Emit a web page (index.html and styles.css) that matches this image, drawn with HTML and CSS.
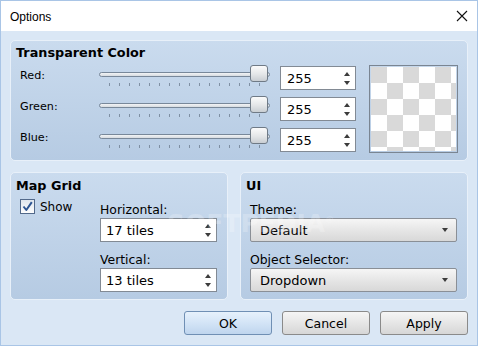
FILE: index.html
```
<!DOCTYPE html>
<html lang="en">
<head>
  <meta charset="UTF-8">
  <title>Options</title>
  <link rel="stylesheet" href="styles.css">
</head>
<body>

  <div class="window">
    <div class="titlebar">
      <span class="title">Options</span>
      <svg class="close" width="12" height="12" viewBox="0 0 12 12">
        <path d="M1 1 L11 11 M11 1 L1 11" stroke="#111" stroke-width="1.1" fill="none" />
      </svg>
    </div>

    <div class="content">
      <!-- Transparent colour -->
      <section class="panel color-panel">
        <h3>Transparent Color</h3>
        <div class="color-grid">
          <div class="label">Red:</div>
          <div class="slider"><div class="track"></div><div class="thumb"></div><div class="ticks"></div></div>
          <div class="spin small"><span>255</span><div class="arrows"><i class="up"></i><i class="down"></i></div></div>

          <div class="preview"></div>

          <div class="label">Green:</div>
          <div class="slider"><div class="track"></div><div class="thumb"></div><div class="ticks"></div></div>
          <div class="spin small"><span>255</span><div class="arrows"><i class="up"></i><i class="down"></i></div></div>

          <div class="label">Blue:</div>
          <div class="slider"><div class="track"></div><div class="thumb"></div><div class="ticks"></div></div>
          <div class="spin small"><span>255</span><div class="arrows"><i class="up"></i><i class="down"></i></div></div>
        </div>
      </section>

      <div class="row">
        <!-- Map grid -->
        <section class="panel grid-panel">
          <h3>Map Grid</h3>
          <div class="grid-body">
            <div class="check">
              <span class="box">
                <svg width="13" height="13" viewBox="0 0 13 13">
                  <path d="M2.5 6.5 L5.3 10 L10.8 2.2" stroke="#2d5592" stroke-width="2" fill="none" stroke-linejoin="round" />
                </svg>
              </span>
              <span>Show</span>
            </div>
            <div class="fields">
              <div class="field-label">Horizontal:</div>
              <div class="spin wide"><span>17 tiles</span><div class="arrows"><i class="up"></i><i class="down"></i></div></div>
              <div class="field-label second">Vertical:</div>
              <div class="spin wide"><span>13 tiles</span><div class="arrows"><i class="up"></i><i class="down"></i></div></div>
            </div>
          </div>
        </section>

        <!-- UI -->
        <section class="panel ui-panel">
          <h3>UI</h3>
          <div class="fields ui-fields">
            <div class="field-label">Theme:</div>
            <div class="combo"><span>Default</span><i class="down"></i></div>
            <div class="field-label second">Object Selector:</div>
            <div class="combo"><span>Dropdown</span><i class="down"></i></div>
          </div>
        </section>
      </div>

      <div class="buttons">
        <button class="btn default">OK</button>
        <button class="btn">Cancel</button>
        <button class="btn">Apply</button>
      </div>
    </div>

    <div class="watermark">SOFTPEDIA<sup>®</sup></div>
  </div>

</body>
</html>
```

FILE: styles.css
```
html, body {
  margin: 0;
  padding: 0;
}

body {
  width: 478px;
  height: 346px;
  overflow: hidden;
  font-family: "DejaVu Sans", sans-serif;
  font-size: 12px;
  color: #000;
}

.window {
  position: relative;
  box-sizing: border-box;
  width: 478px;
  height: 346px;
  border: 1px solid #a9c5e6;
  background: #dae7f5;
}

.titlebar {
  height: 30px;
  background: #fff;
  display: flex;
  align-items: center;
  justify-content: space-between;
  padding: 0 9px 0 9px;
}

.title {
  font-family: "Liberation Sans", Arial, sans-serif;
  font-size: 12px;
  margin-top: 1px;
}

.content {
  padding: 9px 9px 0 9px;
}

.panel {
  box-sizing: border-box;
  border: 1px solid #e8f0f9;
  border-radius: 5px;
  background: linear-gradient(#cadbee, #b6cbe3);
}

.panel h3 {
  margin: 0;
  font-size: 12.8px;
  line-height: 16px;
  font-weight: bold;
  padding-left: 5px;
}

/* transparent colour */
.color-panel {
  height: 121px;
  padding-top: 4px;
}

.color-grid {
  display: grid;
  grid-template-columns: 79px 171px 86px 102px;
  grid-template-rows: 24px 24px 24px;
  row-gap: 7px;
  margin-top: 5px;
  padding-left: 9px;
}

.label {
  padding-top: 2px;
  line-height: 15px;
  font-size: 11.2px;
}

.slider {
  position: relative;
}

.track {
  margin-top: 6px;
  height: 3px;
  border: 1px solid #78889a;
  border-radius: 3px;
  background: linear-gradient(#f2f4f6, #d6dbe0);
}

.thumb {
  position: absolute;
  right: 2px;
  top: -1px;
  box-sizing: border-box;
  width: 18px;
  height: 17px;
  border: 1px solid #6f7a86;
  border-radius: 3px;
  background: linear-gradient(#fbfbfb, #e4e6e8 55%, #c9ced3);
}

.ticks {
  margin: 6px 10px 0 10px;
  height: 3px;
  background: repeating-linear-gradient(90deg, #6f7f92 0 1px, transparent 1px 10px);
  opacity: 0.8;
}

.spin {
  box-sizing: border-box;
  height: 24px;
  border: 1px solid #828a94;
  background: #fff;
  display: flex;
  align-items: center;
  justify-content: space-between;
  font-size: 13px;
}

.spin span {
  padding-left: 6px;
}

.spin.small {
  width: 76px;
  margin-left: 10px;
}

.arrows {
  display: flex;
  flex-direction: column;
  gap: 5px;
  margin-right: 5px;
}

.arrows i, .combo i {
  display: block;
  width: 0;
  height: 0;
  border-left: 3px solid transparent;
  border-right: 3px solid transparent;
}

.arrows .up {
  border-bottom: 4px solid #3c3c3c;
}

.arrows .down, .combo .down {
  border-top: 4px solid #3c3c3c;
}

.preview {
  grid-column: 4;
  grid-row: 1 / 4;
  margin: -1px 0 -1px 13px;
  box-sizing: border-box;
  border: 1px solid #7a8592;
  padding: 1px;
  background-color: #fff;
  background-image: conic-gradient(#fff 25%, #d9d9d9 0 50%, #fff 0 75%, #d9d9d9 0);
  background-size: 32px 32px;
  background-origin: content-box;
  background-clip: content-box;
}

/* second row */
.row {
  display: flex;
  gap: 12px;
  margin-top: 11px;
}

.grid-panel, .ui-panel {
  height: 128px;
  padding-top: 5px;
}

.grid-panel {
  width: 218px;
}

.ui-panel {
  width: 228px;
}

.grid-body {
  display: flex;
  padding-left: 9px;
}

.check {
  width: 80px;
  display: flex;
  align-items: flex-start;
  gap: 5px;
  margin-top: 5px;
  font-size: 12px;
}

.check span:last-child {
  line-height: 15px;
  margin-top: 1px;
}

.box {
  box-sizing: border-box;
  width: 15px;
  height: 15px;
  border: 1px solid #52698a;
  background: linear-gradient(#dfe6ee, #fdfdfd);
  display: flex;
  align-items: center;
  justify-content: center;
}

.fields {
  padding-top: 8px;
}

.field-label {
  line-height: 15px;
  height: 15px;
  margin-bottom: 1px;
  font-size: 12.4px;
}

.field-label.second {
  margin-top: 10px;
}

.spin.wide {
  width: 117px;
}

.spin.wide span {
  padding-left: 5px;
}

.ui-fields {
  padding-left: 9px;
}

.combo {
  box-sizing: border-box;
  width: 207px;
  height: 24px;
  border: 1px solid #8a8f96;
  border-radius: 2px;
  background: linear-gradient(#f6f6f6, #e6e6e6 50%, #d8d8d8);
  display: flex;
  align-items: center;
  justify-content: space-between;
  padding: 0 8px 0 9px;
  font-size: 13px;
}

/* buttons */
.buttons {
  display: flex;
  justify-content: flex-end;
  gap: 10px;
  margin-top: 11px;
}

.btn {
  width: 88px;
  height: 24px;
  border: 1px solid #8a8a8a;
  border-radius: 3px;
  background: linear-gradient(#f5f5f5, #e6e6e6 50%, #d6d6d6);
  font-family: "DejaVu Sans", sans-serif;
  font-size: 12.5px;
  color: #000;
  padding: 0;
}

.btn.default {
  border-color: #6f8fb4;
  background: linear-gradient(#e6f1fc, #d3e4f6 50%, #bfd5ee);
}

.watermark {
  position: absolute;
  left: 166px;
  top: 204px;
  font-family: "DejaVu Sans", sans-serif;
  font-weight: bold;
  font-size: 25px;
  line-height: 30px;
  color: rgba(255, 255, 255, 0.22);
  pointer-events: none;
}

.watermark sup {
  font-size: 9px;
}
```
